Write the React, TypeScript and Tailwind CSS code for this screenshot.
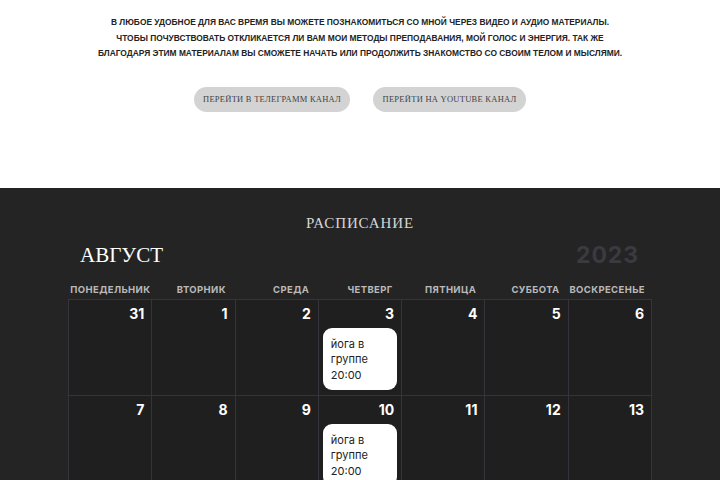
import React from "react";

const days = ["Понедельник", "Вторник", "Среда", "Четверг", "Пятница", "Суббота", "Воскресенье"];

const weeks: number[][] = [
    [31, 1, 2, 3, 4, 5, 6],
    [7, 8, 9, 10, 11, 12, 13],
    [14, 15, 16, 17, 18, 19, 20],
    [21, 22, 23, 24, 25, 26, 27],
    [28, 29, 30, 31, 1, 2, 3],
];

function EventCard() {
    return (
        <div className="mx-1 mt-[6px] rounded-[9px] bg-white px-2 pt-[9px] pb-[7px] text-[11px] leading-[15.5px] text-[#222]">
            <div>йога в</div>
            <div>группе</div>
            <div>20:00</div>
        </div>
    );
}

export default function App() {
    return (
        <div className="w-[720px] bg-white" style={{ fontFamily: "Inter, 'Liberation Sans', sans-serif" }}>
            {/* intro */}
            <section className="flex h-[188px] flex-col items-center bg-white pt-[15px]">
                <div className="text-center text-[8.4px] font-bold uppercase leading-[15.5px] text-[#232323] [font-family:'Liberation_Sans',sans-serif]">
                    <p>в любое удобное для вас время вы можете познакомиться со мной через видео и аудио материалы.</p>
                    <p>чтобы почувствовать откликается ли вам мои методы преподавания, мой голос и энергия. так же</p>
                    <p>благодаря этим материалам вы сможете начать или продолжить знакомство со своим телом и мыслями.</p>
                </div>
                <div className="mt-[25px] flex gap-[23px] [font-family:'Liberation_Serif',serif]">
                    <button className="h-[25px] w-[156px] rounded-full bg-[#d3d3d3] text-[8.5px] uppercase tracking-[0.03em] text-[#444]">
                        Перейти в телеграмм канал
                    </button>
                    <button className="h-[25px] w-[153px] rounded-full bg-[#d3d3d3] text-[8.5px] uppercase tracking-[0.03em] text-[#444]">
                        Перейти на youtube канал
                    </button>
                </div>
            </section>

            {/* schedule */}
            <section className="bg-[#242424] pb-10">
                <h2 className="pt-[24px] text-center text-[15px] uppercase tracking-[0.06em] text-[#d6d6d6] [font-family:'Liberation_Serif',serif]">
                    Расписание
                </h2>
                <div className="mx-auto mt-[7px] flex w-[584px] items-end justify-between">
                    <div className="pl-[12px] text-[21px] uppercase leading-[26px] text-white [font-family:'Liberation_Serif',serif]">
                        Август
                    </div>
                    <div className="pr-[13px] text-[23px] font-bold leading-[26px] tracking-[0.04em] text-[#3a3a40]">2023</div>
                </div>
                <div className="mx-auto mt-[16px] w-[584px]">
                    <div className="grid grid-cols-7">
                        {days.map((d, i) => (
                            <div
                                key={d}
                                className={
                                    "flex justify-end whitespace-nowrap pb-[3px] text-[9.5px] font-bold uppercase leading-[12px] tracking-[0.04em] text-[#b9b9b9] " +
                                    (i === 0 ? "pr-[1px]" : i === 6 ? "pr-[7px]" : "pr-[9px]")
                                }
                            >
                                {d}
                            </div>
                        ))}
                    </div>
                    <div className="border-r border-b border-[#35343a] bg-[#1f1f1f]">
                        {weeks.map((w, wi) => (
                            <div key={wi} className="grid grid-cols-7">
                                {w.map((n, di) => (
                                    <div key={di} className="h-[96px] border-t border-l border-[#35343a]">
                                        <div className="pt-[5px] pr-[7px] text-right text-[14px] font-bold leading-[17px] text-white">{n}</div>
                                        {di === 3 && wi < 4 && <EventCard />}
                                    </div>
                                ))}
                            </div>
                        ))}
                    </div>
                </div>
            </section>
        </div>
    );
}
